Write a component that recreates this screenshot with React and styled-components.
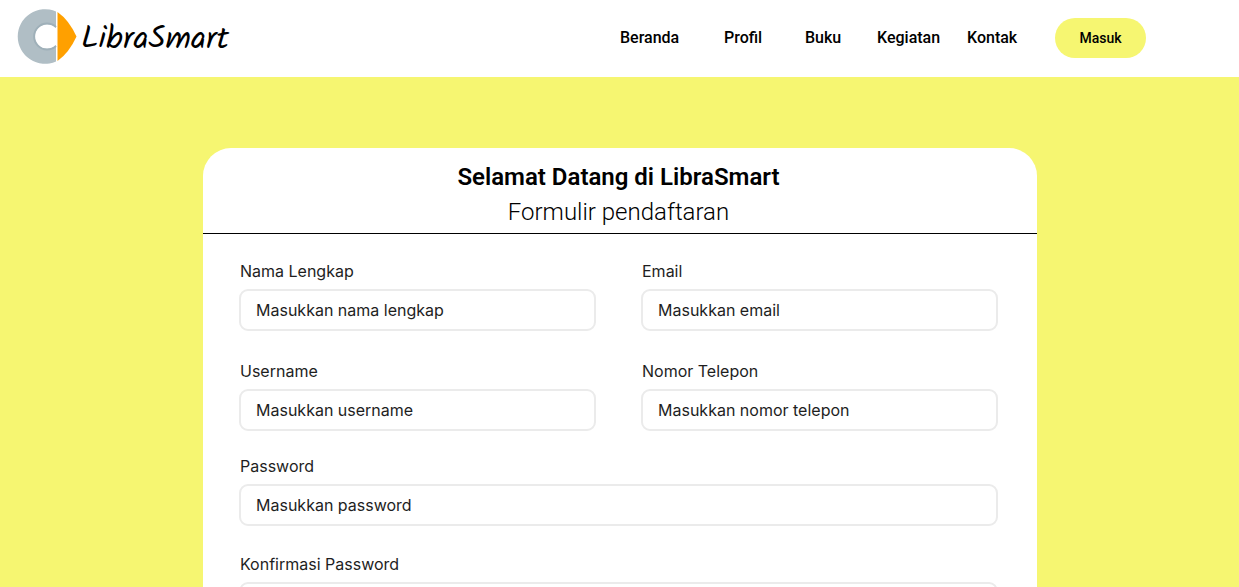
import React from 'react';
import styled, { createGlobalStyle } from 'styled-components';

const GlobalStyle = createGlobalStyle`
  *, *::before, *::after { box-sizing: border-box; }
  body {
    margin: 0;
    background: #f6f671;
    color: #000;
    font-family: Roboto, sans-serif;
  }
`;

const Header = styled.header`
  display: flex;
  align-items: center;
  justify-content: space-between;
  height: 77px;
  padding: 0 93px 2px 17px;
  background: #fff;
`;

const Brand = styled.a`
  display: flex;
  align-items: center;
  gap: 4px;
  color: #000;
  text-decoration: none;
`;

const BrandName = styled.span`
  padding-top: 4px;
  font: 400 32px/40px Kalam, cursive;
`;

const Nav = styled.nav`
  display: grid;
  grid-template-columns: 104px 81px 72px 90px 88px 91px;
  align-items: center;
`;

const NavLink = styled.a`
  color: #000;
  font-size: 16px;
  font-weight: 500;
  line-height: 24px;
  text-decoration: none;
`;

const LoginButton = styled.button`
  height: 40px;
  padding: 0 24px;
  border: 0;
  border-radius: 20px;
  background: #f6f671;
  color: #000;
  font: 500 14px/20px Roboto, sans-serif;
  cursor: pointer;
`;

const Main = styled.main`
  padding: 71px 202px 0 203px;
`;

const Card = styled.section`
  border-radius: 28px 28px 0 0;
  background: #fff;
`;

const CardHeader = styled.div`
  padding: 12px 39px 4px 36px;
  border-bottom: 1px solid #000;
  text-align: center;
`;

const Title = styled.h1`
  margin: 0;
  font-size: 24px;
  font-weight: 600;
  line-height: 35px;
`;

const Subtitle = styled.p`
  margin: 0;
  font-size: 24px;
  font-weight: 300;
  line-height: 34px;
`;

const Form = styled.form`
  display: grid;
  gap: 25px;
  padding: 27px 39px 40px 36px;
`;

const FieldPairs = styled.div`
  display: grid;
  grid-template-columns: 1fr 1fr;
  gap: 30px 45px;
`;

const FieldStack = styled.div`
  display: grid;
  gap: 28px;
`;

const FieldBox = styled.div`
  display: grid;
  gap: 8px;
`;

const Label = styled.label`
  padding-left: 1px;
  color: #1e1e1e;
  font: 400 16px/20px Inter, sans-serif;
`;

const Input = styled.input`
  width: 100%;
  height: 42px;
  padding: 0 15px;
  border: 2px solid #ebebeb;
  border-radius: 9px;
  background: #fff;
  color: #1e1e1e;
  font: 400 16px/20px Inter, sans-serif;

  &::placeholder {
    color: #1e1e1e;
    opacity: 1;
  }
`;

const links = ['Beranda', 'Profil', 'Buku', 'Kegiatan', 'Kontak'];

function Logo() {
  return (
    <svg width="60" height="60" viewBox="0 -2 60 60" aria-hidden="true">
      <path d="M39 1.500A27.300 27.300 0 1 0 39 51.500V35A12.300 12.300 0 1 1 39 18Z" fill="#b0bec5" />
      <path d="M39 17A13 13 0 1 0 39 36" fill="none" stroke="#9fb0b9" strokeWidth="2" />
      <path d="M40.500 2Q52 10 59.500 26.500Q52 43 40.500 51Z" fill="#ffa000" />
    </svg>
  );
}

function Field({ id, label, type = 'text', placeholder }) {
  return (
    <FieldBox>
      <Label htmlFor={id}>{label}</Label>
      <Input id={id} name={id} type={type} placeholder={placeholder} />
    </FieldBox>
  );
}

export default function App() {
  return (
    <>
      <GlobalStyle />
      <Header>
        <Brand href="#">
          <Logo />
          <BrandName>LibraSmart</BrandName>
        </Brand>
        <Nav>
          {links.map((name) => (
            <NavLink key={name} href={`#${name.toLowerCase()}`}>{name}</NavLink>
          ))}
          <LoginButton type="button">Masuk</LoginButton>
        </Nav>
      </Header>
      <Main>
        <Card>
          <CardHeader>
            <Title>Selamat Datang di LibraSmart</Title>
            <Subtitle>Formulir pendaftaran</Subtitle>
          </CardHeader>
          <Form>
            <FieldPairs>
              <Field id="nama" label="Nama Lengkap" placeholder="Masukkan nama lengkap" />
              <Field id="email" label="Email" type="email" placeholder="Masukkan email" />
              <Field id="username" label="Username" placeholder="Masukkan username" />
              <Field id="telepon" label="Nomor Telepon" type="tel" placeholder="Masukkan nomor telepon" />
            </FieldPairs>
            <FieldStack>
              <Field id="password" label="Password" type="password" placeholder="Masukkan password" />
              <Field id="konfirmasi" label="Konfirmasi Password" type="password" />
            </FieldStack>
          </Form>
        </Card>
      </Main>
    </>
  );
}
